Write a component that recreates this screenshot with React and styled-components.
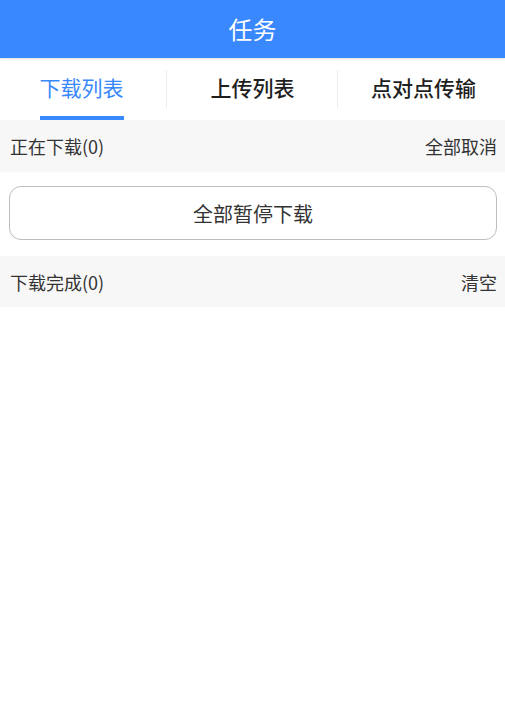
import React, { useState } from "react";
import styled, { createGlobalStyle } from "styled-components";

const Global = createGlobalStyle`
  html, body { margin: 0; padding: 0; background: #fff; }
  body { font-family: "Noto Sans CJK SC", "Noto Sans", sans-serif; }
`;

const Page = styled.div`
  width: 505px;
  min-height: 710px;
  background: #fff;
  display: flex;
  flex-direction: column;
`;

const Header = styled.header`
  height: 58px;
  background: #3a88fd;
  color: #fff;
  font-size: 24px;
  display: flex;
  align-items: center;
  justify-content: center;
  padding-bottom: 2px;
  box-sizing: border-box;
  box-shadow: 0 1px 2px rgba(0, 0, 0, 0.12);
  position: relative;
  z-index: 1;
`;

const Tabs = styled.nav`
  height: 62px;
  display: grid;
  grid-template-columns: 167px 171px 167px;
  align-items: stretch;
`;

const Tab = styled.div`
  position: relative;
  display: flex;
  align-items: stretch;
  justify-content: center;
  font-size: 21px;
  color: ${(p) => (p.$active ? "#3a88fd" : "#1f1f1f")};
  font-weight: ${(p) => (p.$active ? 400 : 500)};
  padding-left: ${(p) => (p.$shift > 0 ? p.$shift * 2 : 0)}px;
  padding-right: ${(p) => (p.$shift < 0 ? -p.$shift * 2 : 0)}px;
  &:not(:last-child)::before {
    content: "";
    position: absolute;
    right: 0;
    top: 12px;
    bottom: 12px;
    width: 1px;
    background: #ececec;
  }
`;

const TabLabel = styled.span`
  position: relative;
  display: flex;
  align-items: center;
  padding-bottom: 4px;
`;

const Underline = styled.span`
  position: absolute;
  left: 0;
  right: 0;
  bottom: 0;
  height: 4px;
  background: #3a88fd;
`;

const SectionRow = styled.div`
  height: ${(p) => p.$h || 52}px;
  background: #f7f7f7;
  display: flex;
  align-items: center;
  justify-content: space-between;
  padding: 0 8px 0 10px;
  font-size: 18px;
  color: #333;
`;

const ButtonWrap = styled.div`
  padding: 14px 8px 16px 9px;
`;

const Button = styled.button`
  width: 100%;
  height: 54px;
  border: 1px solid #bdbdbd;
  border-radius: 12px;
  background: #fff;
  font-family: inherit;
  font-size: 20px;
  color: #333;
  cursor: pointer;
  padding-top: 2px;
`;

const tabs = [
  { label: "下载列表", shift: -2 },
  { label: "上传列表", shift: 0 },
  { label: "点对点传输", shift: 2 },
];

export default function App() {
  const [tab, setTab] = useState(0);
  return (
    <Page>
      <Global />
      <Header>任务</Header>
      <Tabs>
        {tabs.map((t, i) => (
          <Tab key={t.label} $active={tab === i} $shift={t.shift} onClick={() => setTab(i)}>
            <TabLabel>
              {t.label}
              {tab === i && <Underline />}
            </TabLabel>
          </Tab>
        ))}
      </Tabs>
      <SectionRow $h={52}>
        <span>正在下载(0)</span>
        <span>全部取消</span>
      </SectionRow>
      <ButtonWrap>
        <Button>全部暂停下载</Button>
      </ButtonWrap>
      <SectionRow $h={51}>
        <span>下载完成(0)</span>
        <span>清空</span>
      </SectionRow>
    </Page>
  );
}
